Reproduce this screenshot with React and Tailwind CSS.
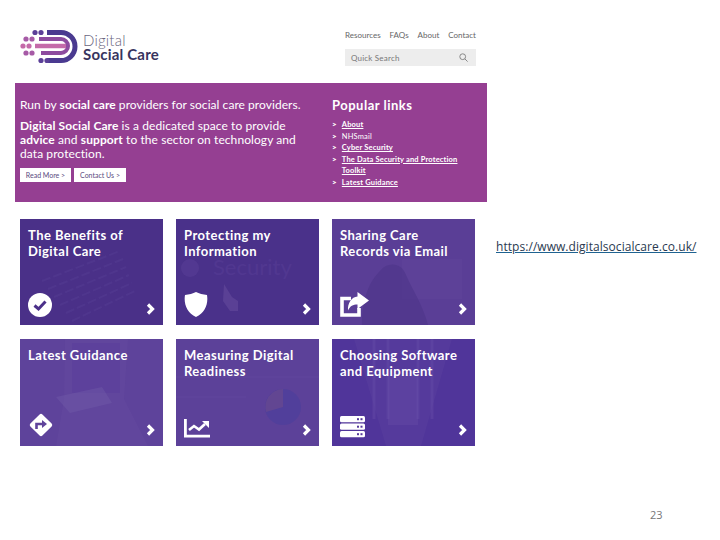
import React from "react";

const sans = "font-['Lato','Open_Sans',sans-serif]";

function Chevron() {
  return (
    <svg width="9" height="12" viewBox="0 0 9 12" className="shrink-0">
      <path d="M2 1.5 L6.5 6 L2 10.5" fill="none" stroke="white" strokeWidth="3.2" />
    </svg>
  );
}

function Logo() {
  return (
    <svg width="60" height="38" viewBox="0 0 60 38">
      <path d="M27 4.5 H41 A14 14 0 0 1 41 32.5 H27" fill="none" stroke="#4a3a90" strokeWidth="5" />
      <path d="M19 11 H41 A7 7 0 0 1 41 25 H21" fill="none" stroke="#8d4b9f" strokeWidth="4" />
      <path d="M15 18 H46" fill="none" stroke="#c46aa9" strokeWidth="4.5" />
      <circle cx="15" cy="4.5" r="2.6" fill="#5b3f98" />
      <circle cx="21" cy="4.5" r="2.6" fill="#5b3f98" />
      <circle cx="6" cy="11" r="2.6" fill="#a65aa6" />
      <circle cx="12" cy="11" r="2.6" fill="#a65aa6" />
      <circle cx="3" cy="18" r="2.6" fill="#c46aa9" />
      <circle cx="9" cy="18" r="2.6" fill="#c46aa9" />
      <circle cx="6" cy="25" r="2.6" fill="#a65aa6" />
      <circle cx="12" cy="25" r="2.6" fill="#a65aa6" />
      <circle cx="21" cy="32.5" r="2.6" fill="#5b3f98" />
      <circle cx="27" cy="32.5" r="2.6" fill="#5b3f98" />
    </svg>
  );
}

const CheckIcon = (
  <svg width="24" height="24" viewBox="0 0 24 24">
    <circle cx="12" cy="12" r="12" fill="white" />
    <path d="M6.5 12.5 L10.5 16 L17.5 8.5" fill="none" stroke="#4b3089" strokeWidth="3" />
  </svg>
);

const ShieldIcon = (
  <svg width="24" height="25" viewBox="0 0 24 25">
    <path d="M12 0 C15 1.5 19 2.5 23 3 C24.5 12 21 21 12 25 C3 21 -0.5 12 1 3 C5 2.5 9 1.5 12 0 Z" fill="white" />
  </svg>
);

const ShareIcon = (
  <svg width="29" height="25" viewBox="0 0 29 25">
    <path d="M11 6.5 H2 V23 H19 V16" fill="none" stroke="white" strokeWidth="3.6" />
    <path d="M17.5 0 L29 8.5 L17.5 17 V12.5 C13 12.5 10 14 8 18.5 C7.5 11 11.5 5 17.5 4.5 Z" fill="white" />
  </svg>
);

const DirectionIcon = (
  <svg width="26" height="26" viewBox="0 0 26 26">
    <rect x="4.5" y="4.5" width="17" height="17" rx="2" transform="rotate(45 13 13)" fill="white" />
    <path d="M8.5 17 V12 H15" fill="none" stroke="#5f439b" strokeWidth="2.6" />
    <path d="M14 8 L19 12 L14 16 Z" fill="#5f439b" />
  </svg>
);

const ChartIcon = (
  <svg width="26" height="19" viewBox="0 0 26 19">
    <path d="M1.4 0 V17.2 H26" fill="none" stroke="white" strokeWidth="2.8" />
    <path d="M5 11 L10 7 L15 10.5 L21 5" fill="none" stroke="white" strokeWidth="2.6" />
    <path d="M18 2 H25 V9 Z" fill="white" />
  </svg>
);

const ServerIcon = (
  <svg width="25" height="22" viewBox="0 0 25 22">
    {[0, 7.5, 15].map((y) => (
      <g key={y}>
        <rect x="0" y={y} width="25" height="6.2" rx="1.5" fill="white" />
        <rect x="17" y={y + 2.2} width="2" height="2" fill="#55399a" />
        <rect x="20.5" y={y + 2.2} width="2" height="2" fill="#55399a" />
      </g>
    ))}
  </svg>
);

// faint photo shapes behind the card text
const CodeBack = (
  <svg className="absolute inset-0" width="143" height="106" viewBox="0 0 143 106">
    {[50, 58, 66, 74, 82, 90].map((y, i) => (
      <path key={y} d={`M${22 + i * 6} ${y + 12} L${100 + i * 3} ${y - 18}`} stroke="#6a53a6" strokeOpacity="0.18" strokeWidth="2" strokeDasharray="9 3" />
    ))}
  </svg>
);

const SecurityBack = (
  <svg className="absolute inset-0" width="143" height="106" viewBox="0 0 143 106">
    <circle cx="14" cy="49" r="9" fill="#5d439a" fillOpacity="0.45" />
    <text x="37" y="56" fontSize="22" fontFamily="Lato, sans-serif" fill="#5d439a" fillOpacity="0.4">Security</text>
    <path d="M48 65 L56 78 L62 82 V92 H54 L47 82 Z" fill="#6a4f9f" fillOpacity="0.5" />
  </svg>
);

const PersonBack = (
  <svg className="absolute inset-0" width="143" height="106" viewBox="0 0 143 106">
    <rect x="70" y="40" width="60" height="40" fill="#6a4ea0" fillOpacity="0.2" />
    <path d="M30 106 C30 78 38 62 48 52 C56 42 70 44 74 56 C80 70 90 84 96 106 Z" fill="#4a3186" fillOpacity="0.5" />
  </svg>
);

const TabletBack = (
  <svg className="absolute inset-0" width="143" height="107" viewBox="0 0 143 107">
    <path d="M45 0 H108 L104 60 L128 107 H36 L44 60 Z" fill="#6b50a4" fillOpacity="0.25" />
    <rect x="52" y="4" width="48" height="50" fill="#55399a" fillOpacity="0.3" />
    <path d="M36 58 L82 48 L92 64 L50 74 Z" fill="#7660ad" fillOpacity="0.35" />
  </svg>
);

const PieBack = (
  <svg className="absolute inset-0" width="143" height="107" viewBox="0 0 143 107">
    <path d="M0 38 H143 M0 58 H70" stroke="#6d53a6" strokeOpacity="0.3" />
    <circle cx="107" cy="68" r="18" fill="#4d3f9b" fillOpacity="0.7" />
    <path d="M107 68 V50 A18 18 0 0 0 90 73 Z" fill="#6a4a8e" fillOpacity="0.7" />
  </svg>
);

const RackBack = (
  <svg className="absolute inset-0" width="143" height="107" viewBox="0 0 143 107">
    <path d="M22 0 L54 107 H89 L120 0 Z" fill="#5f45a0" fillOpacity="0.35" />
    <path d="M42 0 V80 M100 0 V80 M56 0 V80 M86 0 V80" stroke="#634aa5" strokeOpacity="0.5" strokeWidth="3" />
    <rect x="56" y="36" width="30" height="50" fill="#6b50a9" fillOpacity="0.35" />
  </svg>
);

const cards = [
  { title: "The Benefits of", title2: "Digital Care", bg: "bg-[#4a3088]", icon: CheckIcon, back: CodeBack, h: "h-[106px]" },
  { title: "Protecting my", title2: "Information", bg: "bg-[#4a318a]", icon: ShieldIcon, back: SecurityBack, h: "h-[106px]" },
  { title: "Sharing Care", title2: "Records via Email", bg: "bg-[#5a3e96]", icon: ShareIcon, back: PersonBack, h: "h-[106px]" },
  { title: "Latest Guidance", title2: "", bg: "bg-[#5e439b]", icon: DirectionIcon, back: TabletBack, h: "h-[107px]" },
  { title: "Measuring Digital", title2: "Readiness", bg: "bg-[#5c4199]", icon: ChartIcon, back: PieBack, h: "h-[107px]" },
  { title: "Choosing Software", title2: "and Equipment", bg: "bg-[#50359a]", icon: ServerIcon, back: RackBack, h: "h-[107px]" },
];

function Card({ card }) {
  return (
    <div className={`relative overflow-hidden ${card.bg} ${card.h}`}>
      {card.back}
      <div className="relative flex h-full flex-col justify-between pl-2 pr-[8px] pt-[8px] pb-[8px]">
        <div className="text-[13px] leading-[16px] font-bold tracking-[0.45px] whitespace-nowrap text-white">
          <div>{card.title}</div>
          {card.title2 && <div>{card.title2}</div>}
        </div>
        <div className="flex items-end justify-between">
          {card.icon}
          <div className="mb-[2px]">
            <Chevron />
          </div>
        </div>
      </div>
    </div>
  );
}

function PopularLink({ text, second, plain }) {
  return (
    <li className="flex gap-[5px]">
      <span className="text-[8px] leading-[11.5px] font-black">&gt;</span>
      <span className={plain ? "font-normal" : "underline"}>
        {text}
        {second && <span className="block">{second}</span>}
      </span>
    </li>
  );
}

export default function App() {
  return (
    <div className={`flex h-[540px] w-[720px] overflow-hidden bg-white ${sans}`}>
      <div className="ml-[15px] w-[472px] shrink-0">
        <header className="flex h-[83px] justify-between">
          <div className="flex h-fit items-center gap-[3px] pl-[5px] pt-[28px]">
            <Logo />
            <div className="text-[15px] leading-[14px] tracking-[0.2px] text-[#38345e]">
              <div className="font-light text-[#6a6580]">Digital</div>
              <div className="font-bold">Social Care</div>
            </div>
          </div>
          <div className="mr-[11px] w-[131px] pt-[30px]">
            <nav className="flex justify-between text-[8px] leading-[10px] text-[#666]">
              <span>Resources</span>
              <span>FAQs</span>
              <span>About</span>
              <span>Contact</span>
            </nav>
            <div className="mt-[9px] flex h-[17px] items-center justify-between bg-[#ededed] pl-[6px] pr-[8px] text-[8px] tracking-[0.2px] text-[#777]">
              <span>Quick Search</span>
              <svg width="9" height="9" viewBox="0 0 9 9">
                <circle cx="3.7" cy="3.7" r="2.9" fill="none" stroke="#888" />
                <path d="M5.8 5.8 L8.6 8.6" stroke="#888" />
              </svg>
            </div>
          </div>
        </header>

        <section className="flex h-[119px] bg-[#953f92] text-white">
          <div className="w-[317px] pl-[5px] pt-[15px]">
            <p className="text-[12px] leading-[14px] tracking-[0.05px] whitespace-nowrap">
              Run by <span className="font-bold">social care</span> providers for social care providers.
            </p>
            <p className="mt-[7px] text-[12px] leading-[14px] tracking-[0.08px]">
              <span className="block whitespace-nowrap"><b>Digital Social Care</b> is a dedicated space to provide</span>
              <span className="block whitespace-nowrap"><b>advice</b> and <b>support</b> to the sector on technology and</span>
              <span className="block whitespace-nowrap">data protection.</span>
            </p>
            <div className="mt-[7px] flex gap-[3px] text-[7px] text-[#5a4a80]">
              <span className="flex h-[14px] w-[51px] items-center justify-center bg-white">Read More &gt;</span>
              <span className="flex h-[14px] w-[52px] items-center justify-center bg-white">Contact Us &gt;</span>
            </div>
          </div>
          <div className="pt-[14px]">
            <h2 className="text-[13px] leading-[17px] font-bold tracking-[0.5px]">Popular links</h2>
            <ul className="mt-[5px] text-[7.5px] leading-[11.5px] font-bold tracking-[0.16px]">
              <PopularLink text="About" />
              <PopularLink text="NHSmail" plain />
              <PopularLink text="Cyber Security" />
              <PopularLink text="The Data Security and Protection" second="Toolkit" />
              <PopularLink text="Latest Guidance" />
            </ul>
          </div>
        </section>

        <section className="mt-[17px] ml-[5px] grid w-[455px] grid-cols-3 gap-x-[13px] gap-y-[14px]">
          {cards.map((card) => (
            <Card key={card.title} card={card} />
          ))}
        </section>
      </div>

      <div className="flex flex-1 flex-col pl-[9px]">
        <a className="mt-[239px] font-['Open_Sans',sans-serif] text-[12px] leading-[16px] tracking-[0.05px] whitespace-nowrap text-[#2a3a50] underline decoration-[#1f6391]" href="#">
          https://www.digitalsocialcare.co.uk/
        </a>
        <div className="mt-[252px] pl-[154px] font-['Open_Sans',sans-serif] text-[11px] leading-[16px] text-[#777]">23</div>
      </div>
    </div>
  );
}
